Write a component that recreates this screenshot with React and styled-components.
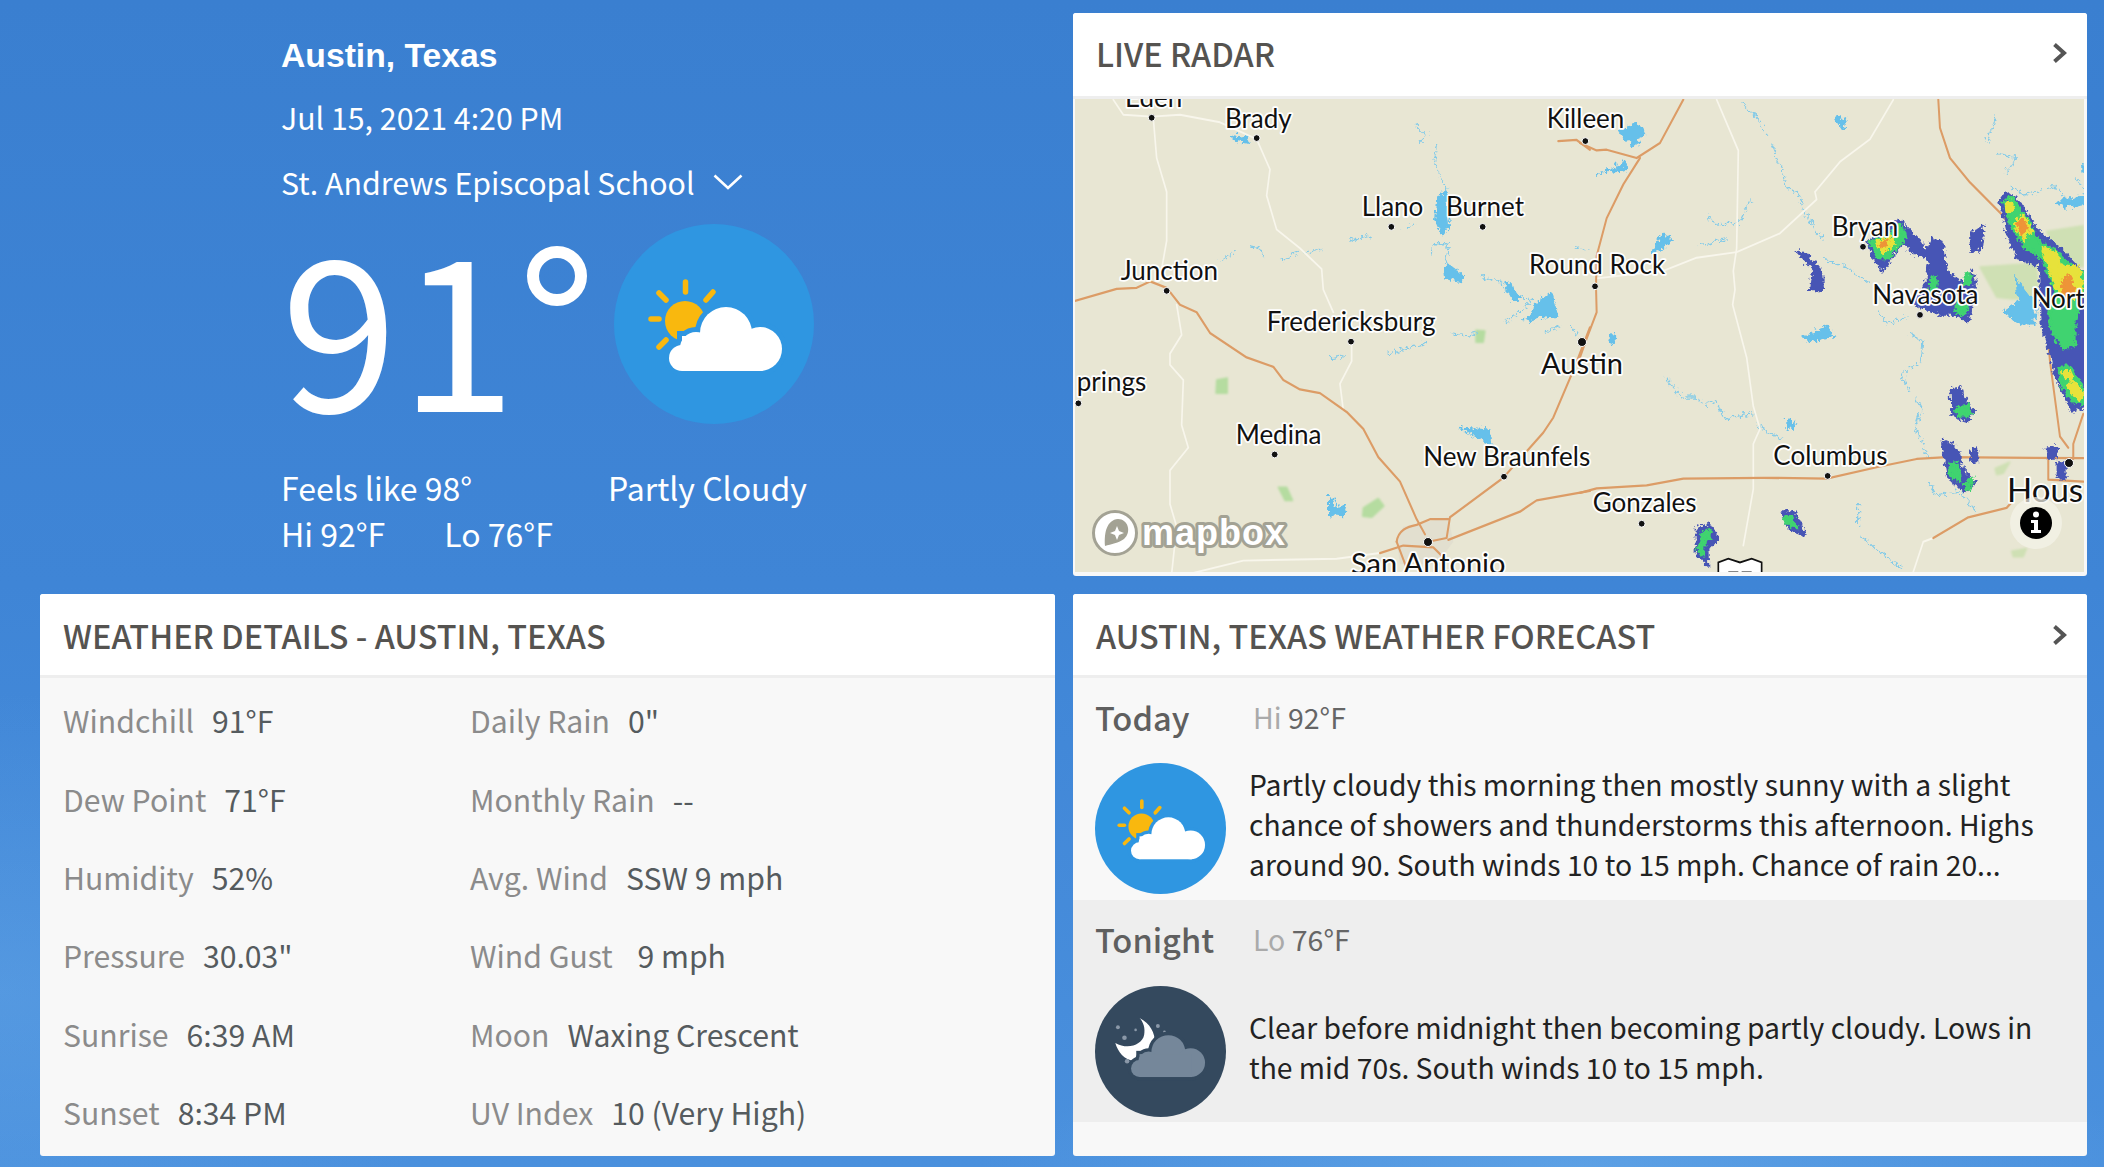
import styled, { createGlobalStyle } from 'styled-components';

const BODY_FONT = `"Noto Sans CJK SC", "Noto Sans", sans-serif`;

const GlobalStyle = createGlobalStyle`
  html, body {
    margin: 0;
    padding: 0;
    background: #3f85d5;
  }
  * { box-sizing: border-box; }
`;

const Page = styled.div`
  width: 2104px;
  height: 1167px;
  overflow: hidden;
  display: grid;
  grid-template-columns: 1015px 1014px;
  grid-template-rows: 563px 562px;
  column-gap: 18px;
  row-gap: 18px;
  padding: 13px 17px 11px 40px;
  font-family: ${BODY_FONT};
  background:
    radial-gradient(ellipse 500px 300px at 0% 85%, rgba(110, 175, 235, 0.35), transparent),
    radial-gradient(ellipse 600px 120px at 75% 100%, rgba(120, 185, 240, 0.4), transparent),
    linear-gradient(180deg, #3a7fd0 0%, #3f85d6 50%, #4a90dd 100%);
`;

const Hero = styled.section`
  padding: 20px 0 0 241px;
  color: #fff;
`;

const City = styled.h1`
  margin: 0;
  font-family: "Liberation Sans", Arial, sans-serif;
  font-size: 33.7px;
  line-height: 44px;
  font-weight: 700;
`;

const DateLine = styled.div`
  margin-top: 18px;
  font-size: 30.3px;
  line-height: 44px;
`;

const Station = styled.div`
  margin-top: 21px;
  display: flex;
  align-items: center;
  gap: 18px;
  font-size: 30.3px;
  line-height: 44px;
`;

const NowRow = styled.div`
  display: flex;
  height: 200px;
  margin-top: 20px;
`;

const BigTemp = styled.div`
  display: flex;
  align-items: flex-start;
  width: 333px;
  height: 220px;
  margin-top: -14px;
  font-size: 210px;
  line-height: 220px;
  font-weight: 400;
  letter-spacing: 2px;
`;

const Degree = styled.span`
  margin: 36px 0 0 9px;
  width: 60px;
  height: 60px;
  flex: none;
  border: 12px solid #fff;
  border-radius: 50%;
`;

const HeroIcon = styled.svg`
  width: 200px;
  height: 200px;
  flex: none;
`;

const Conditions = styled.div`
  display: grid;
  grid-template-columns: 327px auto;
  margin-top: 40px;
  font-size: 32px;
  line-height: 46px;
`;

const HiLo = styled.div`
  display: flex;
  gap: 59px;
`;

const Card = styled.section`
  display: flex;
  flex-direction: column;
  background: #f8f8f8;
  border-radius: 3px;
  overflow: hidden;
`;

const CardHeader = styled.header`
  flex: none;
  height: ${p => p.$h}px;
  display: flex;
  align-items: center;
  justify-content: space-between;
  padding: 0 20px ${p => p.$lift || 0}px 23px;
  background: #fff;
  border-bottom: 3px solid #eeeeee;
  color: #555350;
`;

const CardTitle = styled.h2`
  margin: 0;
  font-size: 32.4px;
  font-weight: 500;
  line-height: 44px;
`;

const MapWrap = styled.div`
  flex: 1;
  min-height: 0;
  padding: 0 3px 4px 2px;
`;

const MapSvg = styled.svg`
  display: block;
  width: 1009px;
  height: 473px;
  background: #e8e6d3;
`;

const MapLabel = styled.text`
  font-family: Lato, sans-serif;
  font-size: ${p => p.$size || 26}px;
  fill: #111;
  stroke: #fff;
  stroke-width: 3.5px;
  stroke-linejoin: round;
  paint-order: stroke;
`;

const LogoText = styled.text`
  font-family: "Liberation Sans", Arial, sans-serif;
  font-weight: 700;
  font-size: 36px;
  letter-spacing: 1px;
  fill: #fff;
  stroke: #a3a294;
  stroke-width: 6px;
  stroke-linejoin: round;
  paint-order: stroke;
`;

const DetailGrid = styled.div`
  display: grid;
  grid-template-columns: 407px auto;
  grid-auto-rows: 78.4px;
  padding: 3px 23px 0;
  font-size: 30.2px;
`;

const Stat = styled.div`
  display: flex;
  align-items: center;
  gap: 18px;
`;

const StatLabel = styled.span`
  color: #8b8b8b;
`;

const StatValue = styled.span`
  color: #555b5e;
`;

const Period = styled.div`
  flex: none;
  height: ${p => p.$h}px;
  padding: 16px 23px 0 22px;
  background: ${p => (p.$shade ? '#eeeeee' : 'transparent')};
`;

const PeriodHead = styled.div`
  display: flex;
  align-items: center;
  height: 44px;
`;

const PeriodName = styled.div`
  width: 158px;
  font-size: 32.6px;
  font-weight: 500;
  color: #5f5f5f;
`;

const PeriodTemp = styled.div`
  font-size: 28.5px;
  color: #666;
`;

const TempHint = styled.span`
  color: #aaa;
`;

const PeriodBody = styled.div`
  display: flex;
  align-items: center;
  gap: 23px;
  margin-top: ${p => p.$gap}px;
`;

const PeriodIcon = styled.svg`
  width: 131px;
  height: 131px;
  flex: none;
`;

const PeriodText = styled.p`
  margin: 0 0 ${p => p.$lift}px;
  font-size: 28.3px;
  line-height: 40px;
  color: #222;
`;

const Chevron = () => (
  <svg width="15" height="22" viewBox="0 0 15 22">
    <path d="M2.5 2.5 L12 11 L2.5 19.5" fill="none" stroke="#555" strokeWidth="4" />
  </svg>
);

const DownChevron = () => (
  <svg width="30" height="16" viewBox="0 0 30 16">
    <path d="M1.5 1.5 L15 14 L28.5 1.5" fill="none" stroke="#fff" strokeWidth="2.6" />
  </svg>
);

const CloudShape = ({ fill, stroke = 'none', dy = 0 }) => (
  <g fill={fill} stroke={stroke} strokeWidth={stroke === 'none' ? 0 : 10} transform={`translate(0 ${dy})`}>
    <circle cx="112" cy="109" r="26" />
    <circle cx="146" cy="125" r="22" />
    <circle cx="82" cy="124" r="16" />
    <circle cx="68" cy="134" r="13" />
    <rect x="68" y="112" width="80" height="35" />
  </g>
);

const SunCloud = () => (
  <>
    <circle cx="100" cy="100" r="100" fill="#2f96e1" />
    <g stroke="#f9b80e" strokeWidth="5.5" strokeLinecap="round">
      <path d="M71.5 58 V68" />
      <path d="M37 95 H45" />
      <path d="M45 69 L52 76" />
      <path d="M99 68 L92 76" />
      <path d="M45 123 L52 116" />
    </g>
    <circle cx="71" cy="97" r="20" fill="#f9b80e" />
    <CloudShape fill="#2f96e1" stroke="#2f96e1" />
    <CloudShape fill="#fff" />
  </>
);

const MoonCloud = () => (
  <>
    <circle cx="100" cy="100" r="100" fill="#34495e" />
    <path d="M68 49 C100 65 100 110 62 114 C45 115 35 100 31 87 C50 98 72 90 75 75 C77 65 74 55 68 49 Z" fill="#fff" />
    <g fill="#8a98a8">
      <circle cx="35" cy="63" r="3" />
      <circle cx="45" cy="79" r="3.5" />
      <circle cx="62" cy="67" r="2" />
      <circle cx="96" cy="61" r="3" />
      <circle cx="106" cy="70" r="2" />
      <circle cx="49" cy="115" r="3.5" />
    </g>
    <CloudShape fill="#34495e" stroke="#34495e" dy={-8} />
    <CloudShape fill="#75879a" dy={-8} />
  </>
);

// Map drawing data, in crop coordinates of each half of the map (x*3, y*2.658)
const LEFT_X = 1070;
const RIGHT_X = 1580;
const SY = 2.658;

const leftHighways = [
  'M15 800 L140 768 L200 765 L240 748 L290 765 L330 810 L380 830 L420 885 L530 950 L610 975 L640 1010 L690 1035 L750 1045 L830 1095 L880 1140 L925 1215 L990 1280 L1040 1380 L1065 1420',
  'M1560 870 L1510 985 L1450 1110 L1420 1150 L1300 1270 L1140 1375 L1130 1430 L1075 1440',
  'M980 1440 C985 1410 1010 1400 1040 1395 L1080 1380 L1135 1380',
  'M1135 1435 L1350 1360 L1400 1330 L1560 1305',
  'M930 1470 L1000 1450 L1090 1455 L1130 1490',
  'M980 1440 L1010 1510',
  'M1465 375 L1520 372 L1560 398',
];

const leftRoads = [
  'M130 265 L160 305 L245 310 L330 305 L450 325 L560 370 L600 450 L590 520 L620 610 L690 660 L755 715 L760 770 L790 830',
  'M250 315 L260 420 L290 510 L290 640 L270 740',
  'M320 810 L335 890 L300 940 L300 970 L340 1010 L335 1130 L355 1190 L300 1250 L300 1340 L320 1400 L305 1525',
  'M845 915 L845 960 L810 1020 L820 1090',
  'M360 1525 L520 1490 L800 1485 L930 1470',
];

const leftRivers = [
  'M1030 325 L1065 350 L1045 370',
  'M1095 380 L1085 420 L1110 480 L1125 490 L1105 520',
  'M1080 670 L1085 640 L1130 640 L1120 700',
  'M1225 730 L1280 740 L1300 770 L1380 790 L1350 820 L1300 850',
  'M445 685 L490 660',
  'M530 645 L560 650 L572 675',
  'M630 685 L680 665',
  'M700 665 L750 655',
  'M830 630 L895 620',
  'M1000 600 L1025 590',
  'M950 935 L1040 910 L1060 905',
  'M1140 880 L1190 885 L1215 875',
  'M775 945 L820 940',
  'M1420 875 L1465 860',
  'M1490 860 L1515 885',
  'M1505 650 L1550 660',
];

const leftLakes = [
  'M475 352 L530 362 L525 372 L495 368 Z',
  'M1095 520 L1122 500 L1132 590 L1108 618 L1088 580 Z',
  'M1115 705 L1130 695 L1172 725 L1168 740 L1118 732 Z',
  'M1360 850 L1392 800 L1435 770 L1458 840 L1410 835 Z',
  'M1165 1130 L1250 1135 L1258 1175 L1210 1155 Z',
  'M770 1310 L785 1320 L790 1340 L825 1340 L815 1365 L770 1362 Z',
  'M1295 745 L1308 740 L1345 790 L1320 790 Z',
];

const leftParks = [
  'M440 1010 L472 1005 L472 1045 L438 1045 Z',
  'M625 1295 L650 1295 L668 1330 L645 1330 Z',
  'M880 1350 L925 1325 L942 1345 L905 1375 L878 1372 Z',
  'M1218 878 L1245 880 L1240 910 L1218 910 Z',
];

const leftLabels = [
  ['Eden', 165, 285],
  ['Brady', 465, 340],
  ['Llano', 875, 575],
  ['Burnet', 1128, 575],
  ['Junction', 152, 745],
  ['Fredericksburg', 590, 880],
  ['prings', 20, 1040],
  ['Medina', 497, 1180],
  ['New Braunfels', 1060, 1238],
  ['Killeen', 1430, 340],
  ['Round Rock', 1377, 728],
];

const leftDots = [
  [245, 313], [560, 367], [964, 603], [1238, 603], [290, 773], [843, 908],
  [25, 1072], [614, 1208], [1302, 1267], [1546, 375],
];

const rightHighways = [
  'M0 1310 L50 1298 L200 1290 L310 1272 L550 1270 L740 1272 L900 1240 L1010 1220 L1100 1215 L1510 1218',
  'M0 380 L50 400 L80 398 L170 420 L240 380 L310 265',
  'M180 420 L130 490 L80 580 L50 680 L48 760 L50 830 L20 900 L0 950',
  'M1075 265 L1080 340 L1110 420 L1170 485 L1260 565 L1380 700 L1395 800 L1410 960 L1440 1160 L1465 1190',
  'M1510 1100 L1480 1180 L1480 1220',
  'M1405 1218 L1405 1275 L1510 1280',
  'M1060 1430 L1165 1375 L1280 1350 L1300 1330',
];

const rightRoads = [
  'M410 265 L475 400 L470 660 L460 720 L465 770 L458 810 L500 950 L520 1080 L540 1140 L520 1180 L520 1300 L490 1450',
  'M50 740 L250 720 L350 685 L470 670 L600 620 L710 530 L705 510 L780 430 L870 370 L940 265',
  'M1000 1520 L1030 1440 L1060 1430',
];

const rightRivers = [
  'M480 265 L510 290 L555 350',
  'M565 375 L600 440 L610 490 L650 510 L660 545 L700 600 L720 630',
  'M380 570 L420 590 L470 585 L510 520',
  'M725 685 L790 700 L860 745',
  'M355 645 L430 630',
  'M890 825 L920 855 L975 835',
  'M985 880 L1020 900 L1015 950 L960 990 L985 1040',
  'M1005 1055 L1020 1080 L1000 1130 L1040 1210',
  'M250 1000 L300 1050 L340 1050 L370 1070 L400 1060 L430 1105 L510 1095',
  'M520 1125 L600 1160',
  'M1040 1280 L1060 1310 L1130 1300 L1180 1350',
  'M830 1330 L830 1390',
  'M840 1420 L900 1470 L960 1500',
  'M1240 300 L1215 370',
  'M1245 400 L1300 410 L1270 460',
  'M1285 490 L1330 510 L1420 490 L1450 520',
  'M1480 465 L1510 490',
];

const rightLakes = [
  'M110 340 L170 320 L185 345 L160 385 L125 360 Z',
  'M50 455 L135 425 L130 445 L75 450 Z',
  'M210 665 L240 620 L268 630 L230 660 Z',
  'M760 305 L795 315 L780 338 Z',
  'M660 890 L735 860 L758 885 L700 900 Z',
  'M85 880 L102 885 L92 905 Z',
  'M612 1112 L638 1118 L632 1135 L612 1135 Z',
  'M1420 530 L1470 520 L1510 510 L1510 535 L1450 545 Z',
  'M1500 430 L1510 432 L1510 455 L1500 452 Z',
  'M1300 730 L1340 780 L1365 795 L1358 855 L1320 855 L1265 820 L1310 795 Z',
];

const rightParks = [
  'M1200 710 L1370 700 L1375 790 L1300 795 L1250 790 Z',
  'M1400 615 L1510 600 L1510 710 L1470 700 L1420 650 Z',
  'M1245 1245 L1290 1228 L1270 1258 L1250 1262 Z',
  'M1295 1465 L1340 1458 L1330 1480 L1300 1480 Z',
];

const storms = [
  {
    color: '#4755b5',
    points: [
      '1255,530 1275,505 1320,540 1370,610 1440,660 1490,710 1510,720 1510,1075 1470,1085 1425,1000 1405,930 1380,860 1375,700 1310,680 1285,640',
      '860,640 950,580 975,600 1020,640 1030,670 1050,630 1080,640 1095,720 1150,750 1170,715 1180,740 1160,850 1120,830 1075,830 1000,800 1040,730 1045,680 1000,670 960,640 900,715 880,690',
      '645,665 675,670 720,720 722,765 685,765 695,710',
      '1165,620 1205,595 1195,660 1170,660',
      '1110,1030 1135,1025 1140,1050 1175,1085 1160,1112 1112,1100',
      '1080,1165 1120,1180 1145,1245 1180,1275 1150,1300 1100,1265',
      '1165,1195 1185,1190 1185,1220 1170,1222',
      '1395,1185 1425,1185 1420,1210 1400,1210',
      '600,1355 635,1355 668,1415 620,1400',
      '345,1400 385,1390 410,1430 375,1450 378,1500 345,1470',
      '1425,1225 1450,1225 1450,1265 1425,1265',
    ],
  },
  {
    color: '#3fd36f',
    points: [
      '1265,530 1290,520 1340,580 1365,630 1420,660 1480,710 1510,720 1510,770 1480,840 1480,910 1440,920 1410,870 1400,830 1420,760 1380,680 1330,650 1295,610',
      '865,640 960,595 970,625 920,680 890,680',
      '1430,970 1465,970 1510,1030 1510,1070 1470,1060 1440,1020',
      '1050,730 1065,730 1060,770 1045,770',
      '1150,725 1168,725 1160,750 1145,748',
      '1125,790 1155,810 1145,835 1125,820',
      '1125,1075 1160,1072 1170,1095 1130,1100',
      '1105,1225 1130,1230 1135,1270 1110,1265',
      '1145,1280 1175,1265 1160,1295',
      '605,1370 630,1365 645,1395 615,1390',
      '360,1410 385,1405 385,1425 368,1428 365,1470 350,1460',
    ],
  },
  {
    color: '#e7e23a',
    points: [
      '1270,535 1290,535 1295,550 1275,555',
      '1300,590 1325,565 1350,610 1325,632',
      '1380,650 1420,665 1445,710 1425,760 1395,690',
      '1445,985 1465,985 1475,1005 1450,1000',
      '1455,1020 1475,1010 1505,1040 1490,1060',
      '885,640 930,625 935,645 905,665',
      '1430,700 1490,705 1505,760 1470,790 1430,770',
    ],
  },
  {
    color: '#ee9437',
    points: [
      '1308,590 1322,578 1336,605 1320,620',
      '1440,745 1460,725 1480,770 1450,790',
      '895,642 915,635 915,650 902,655',
    ],
  },
];

const rightLabels = [
  ['Bryan', 755, 628],
  ['Navasota', 877, 808],
  ['Nort', 1355, 818],
  ['Columbus', 580, 1235],
  ['Gonzales', 38, 1362],
];

const rightDots = [
  [849, 656], [1020, 837], [743, 1265], [185, 1392], [45, 761],
];

const Lines = ({ list, color, width, wiggle }) => (
  <g
    fill="none"
    stroke={color}
    strokeWidth={width}
    strokeLinejoin="round"
    strokeLinecap="round"
    filter={wiggle ? 'url(#wiggle)' : undefined}
  >
    {list.map(d => <path key={d} d={d} />)}
  </g>
);

const Fills = ({ list, color, filter = 'url(#soft)' }) => (
  <g fill={color} stroke={color} strokeWidth="4" strokeLinejoin="round" filter={filter}>
    {list.map(d => <path key={d} d={d} />)}
  </g>
);

const Dots = ({ list, ox }) => (
  <g fill="#111" stroke="#fff" strokeWidth="1">
    {list.map(([x, y]) => <circle key={`${x}-${y}`} cx={ox + x / 3} cy={y / SY} r="3.4" />)}
  </g>
);

const Labels = ({ list, ox }) => (
  <>
    {list.map(([text, x, y]) => <MapLabel key={text} x={ox + x / 3} y={y / SY}>{text}</MapLabel>)}
  </>
);

const RadarMap = () => (
  <MapSvg viewBox="1075 99 1009 473">
    <defs>
      <filter id="soft" x="-10%" y="-10%" width="120%" height="120%">
        <feGaussianBlur stdDeviation="2.5" />
      </filter>
      <filter id="wiggle" x="-10%" y="-10%" width="120%" height="120%">
        <feTurbulence type="turbulence" baseFrequency="0.05" numOctaves="2" seed="4" result="noise" />
        <feDisplacementMap in="SourceGraphic" in2="noise" scale="26" xChannelSelector="R" yChannelSelector="G" />
      </filter>
      <filter id="stormy" x="-5%" y="-5%" width="110%" height="110%">
        <feTurbulence type="turbulence" baseFrequency="0.06" numOctaves="2" seed="7" result="noise" />
        <feDisplacementMap in="SourceGraphic" in2="noise" scale="22" xChannelSelector="R" yChannelSelector="G" />
        <feGaussianBlur stdDeviation="2" />
      </filter>
    </defs>
    <g transform={`translate(${LEFT_X} 0) scale(0.3333 ${1 / SY})`}>
      <Fills list={leftParks} color="#b5dca0" />
      <Lines list={leftRivers} color="#84cbe8" width="3.5" wiggle />
      <Fills list={leftLakes} color="#66c0ea" filter="url(#wiggle)" />
      <path d="M980 1440 L1000 1400 L1135 1375 L1150 1440 L1100 1500 L990 1500 Z" fill="#e2dfcf" />
      <Lines list={leftRoads} color="#f8f6ec" width="5" />
      <Lines list={leftHighways} color="#dc9c66" width="6" />
    </g>
    <g transform={`translate(${RIGHT_X} 0) scale(0.3333 ${1 / SY})`}>
      <Fills list={rightParks} color="#cfe0b4" />
      <Lines list={rightRivers} color="#84cbe8" width="3.5" wiggle />
      <Fills list={rightLakes} color="#66c0ea" filter="url(#wiggle)" />
      <Lines list={rightRoads} color="#f8f6ec" width="5" />
      <Lines list={rightHighways} color="#dc9c66" width="6" />
      {storms.map(s => (
        <g key={s.color} fill={s.color} stroke={s.color} strokeWidth="8" strokeLinejoin="round" filter="url(#stormy)">
          {s.points.map(p => <polygon key={p} points={p} />)}
        </g>
      ))}
      <path d="M415 1530 V1495 L445 1485 L480 1495 L515 1485 L545 1495 V1530 Z" fill="#fff" stroke="#111" strokeWidth="5" />
      <path d="M445 1522 H475 M485 1522 H515" stroke="#111" strokeWidth="6" />
    </g>
    <Dots list={leftDots} ox={LEFT_X} />
    <Dots list={rightDots} ox={RIGHT_X} />
    <circle cx="1428" cy="542" r="4.5" fill="#111" stroke="#fff" />
    <circle cx="1582" cy="342" r="4.5" fill="#111" stroke="#fff" />
    <circle cx="2069" cy="463" r="4.5" fill="#111" stroke="#fff" />
    <Labels list={leftLabels} ox={LEFT_X} />
    <Labels list={rightLabels} ox={RIGHT_X} />
    <MapLabel x="1351" y="574" $size={29}>San Antonio</MapLabel>
    <MapLabel x="1541" y="374" $size={29}>Austin</MapLabel>
    <MapLabel x="2007" y="502" $size={33}>Hous</MapLabel>
    <circle cx="2036" cy="523" r="26" fill="#f5f4ea" opacity="0.7" />
    <circle cx="2036" cy="523" r="16" fill="#000" />
    <circle cx="2036" cy="514.5" r="3" fill="#fff" />
    <path d="M2031 520 H2038 V530 H2041 V533 H2031 V530 H2034 V523 H2031 Z" fill="#fff" />
    <g transform="translate(1097 570)">
      <circle cx="18" cy="-37" r="21.5" fill="#fff" stroke="#a3a294" strokeWidth="3" />
      <path d="M8 -24 C7 -38 10 -50 21 -51 C31 -51 35 -38 27 -31 C22 -27 14 -26 8 -24 Z" fill="#a3a294" />
      <path d="M20 -44 L22 -39 L27 -37 L22 -35 L20 -30 L18 -35 L13 -37 L18 -39 Z" fill="#fff" />
      <LogoText x="45" y="-25">mapbox</LogoText>
    </g>
  </MapSvg>
);

const details = [
  ['Windchill', '91°F', 'Daily Rain', '0"'],
  ['Dew Point', '71°F', 'Monthly Rain', '--'],
  ['Humidity', '52%', 'Avg. Wind', 'SSW 9 mph'],
  ['Pressure', '30.03"', 'Wind Gust', '\u00a09 mph'],
  ['Sunrise', '6:39 AM', 'Moon', 'Waxing Crescent'],
  ['Sunset', '8:34 PM', 'UV Index', '10 (Very High)'],
];

export default function App() {
  return (
    <Page>
      <GlobalStyle />
      <Hero>
        <City>Austin, Texas</City>
        <DateLine>Jul 15, 2021 4:20 PM</DateLine>
        <Station>
          St. Andrews Episcopal School
          <DownChevron />
        </Station>
        <NowRow>
          <BigTemp>
            91
            <Degree />
          </BigTemp>
          <HeroIcon viewBox="0 0 200 200"><SunCloud /></HeroIcon>
        </NowRow>
        <Conditions>
          <div>Feels like 98°</div>
          <div>Partly Cloudy</div>
          <HiLo>
            <span>Hi 92°F</span>
            <span>Lo 76°F</span>
          </HiLo>
        </Conditions>
      </Hero>

      <Card>
        <CardHeader $h={86} $lift={3}>
          <CardTitle>LIVE RADAR</CardTitle>
          <Chevron />
        </CardHeader>
        <MapWrap><RadarMap /></MapWrap>
      </Card>

      <Card>
        <CardHeader $h={84}>
          <CardTitle>WEATHER DETAILS - AUSTIN, TEXAS</CardTitle>
        </CardHeader>
        <DetailGrid>
          {details.map(([a, b, c, d]) => [
            <Stat key={a}>
              <StatLabel>{a}</StatLabel>
              <StatValue>{b}</StatValue>
            </Stat>,
            <Stat key={c}>
              <StatLabel>{c}</StatLabel>
              <StatValue>{d}</StatValue>
            </Stat>,
          ])}
        </DetailGrid>
      </Card>

      <Card>
        <CardHeader $h={84}>
          <CardTitle>AUSTIN, TEXAS WEATHER FORECAST</CardTitle>
          <Chevron />
        </CardHeader>
        <Period $h={222}>
          <PeriodHead>
            <PeriodName>Today</PeriodName>
            <PeriodTemp><TempHint>Hi</TempHint> 92°F</PeriodTemp>
          </PeriodHead>
          <PeriodBody $gap={25}>
            <PeriodIcon viewBox="0 0 200 200"><SunCloud /></PeriodIcon>
            <PeriodText $lift={10}>
              Partly cloudy this morning then mostly sunny with a slight chance of showers and thunderstorms this afternoon. Highs around 90. South winds 10 to 15 mph. Chance of rain 20...
            </PeriodText>
          </PeriodBody>
        </Period>
        <Period $h={222} $shade>
          <PeriodHead>
            <PeriodName>Tonight</PeriodName>
            <PeriodTemp><TempHint>Lo</TempHint> 76°F</PeriodTemp>
          </PeriodHead>
          <PeriodBody $gap={26}>
            <PeriodIcon viewBox="0 0 200 200"><MoonCloud /></PeriodIcon>
            <PeriodText $lift={10}>
              Clear before midnight then becoming partly cloudy. Lows in the mid 70s. South winds 10 to 15 mph.
            </PeriodText>
          </PeriodBody>
        </Period>
      </Card>
    </Page>
  );
}
